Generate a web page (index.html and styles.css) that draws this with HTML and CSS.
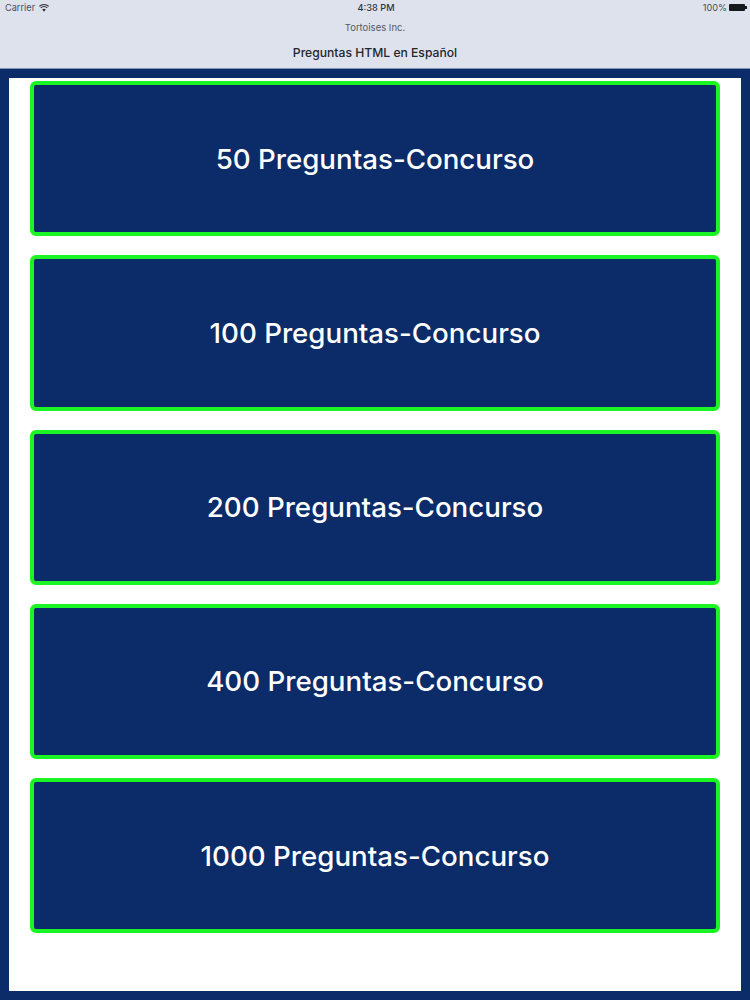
FILE: index.html
```html
<!DOCTYPE html>
<html lang="es">
<head>
<meta charset="utf-8">
<title>Preguntas HTML en Español</title>
<link rel="stylesheet" href="styles.css">
</head>
<body>
<header class="bar">
  <div class="status">
    <div class="status-left">
      <span>Carrier</span>
      <svg class="wifi" width="10" height="8" viewBox="0 0 11 8" aria-hidden="true">
        <path d="M5.5 8 3.6 5.6a3 3 0 0 1 3.8 0Z" fill="#2a2c34"/>
        <path d="M1.9 3.9a5.6 5.6 0 0 1 7.2 0" fill="none" stroke="#2a2c34" stroke-width="1.2"/>
        <path d="M.4 2.1a8 8 0 0 1 10.2 0" fill="none" stroke="#2a2c34" stroke-width="1.2"/>
      </svg>
    </div>
    <div class="status-time">4:38 PM</div>
    <div class="status-right">
      <span>100%</span>
      <span class="battery"><span class="battery-cap"></span></span>
    </div>
  </div>
  <div class="company">Tortoises Inc.</div>
  <div class="title">Preguntas HTML en Español</div>
</header>
<main class="frame">
  <div class="panel">
    <a class="quiz">50 Preguntas-Concurso</a>
    <a class="quiz">100 Preguntas-Concurso</a>
    <a class="quiz">200 Preguntas-Concurso</a>
    <a class="quiz">400 Preguntas-Concurso</a>
    <a class="quiz">1000 Preguntas-Concurso</a>
  </div>
</main>
</body>
</html>
```
FILE: styles.css
```css
* { box-sizing: border-box; }
html, body { margin: 0; padding: 0; }
body {
  width: 750px;
  height: 1000px;
  overflow: hidden;
  background: #0b2b69;
  font-family: Inter, "Liberation Sans", sans-serif;
  display: flex;
  flex-direction: column;
}
.bar {
  height: 69px;
  flex: none;
  background: #dde2ed;
  border-bottom: 1px solid #7f97bd;
  color: #24262e;
}
.status {
  height: 15px;
  display: grid;
  grid-template-columns: 1fr auto 1fr;
  align-items: center;
  padding: 0 3px 0 5px;
  font-size: 9.2px;
  line-height: 15px;
}
.status-left {
  display: flex;
  align-items: center;
  gap: 4px;
  color: #4a4d57;
}
.status-time { font-weight: 500; color: #30333c; }
.status-right {
  display: flex;
  justify-content: flex-end;
  align-items: center;
  gap: 2px;
  color: #4a4d57;
}
.battery {
  position: relative;
  display: block;
  width: 16px;
  height: 7px;
  margin-right: 2px;
  background: #17181d;
  border-radius: 1px;
}
.battery-cap {
  position: absolute;
  left: 16px;
  top: 2px;
  width: 2px;
  height: 3px;
  background: #17181d;
}
.company {
  margin-top: 7px;
  text-align: center;
  font-size: 9.5px;
  line-height: 12px;
  color: #565965;
}
.title {
  margin-top: 11px;
  text-align: center;
  font-size: 12.15px;
  line-height: 16px;
  font-weight: 500;
}
.frame {
  flex: 1;
  padding: 9px 9px 9px;
  display: flex;
}
.panel {
  flex: 1;
  background: #ffffff;
  padding: 3px 21px 0;
  display: flex;
  flex-direction: column;
  gap: 19px;
}
.quiz {
  height: 155.25px;
  flex: none;
  display: flex;
  align-items: center;
  justify-content: center;
  background: #0b2b69;
  border: 4px solid #1bf524;
  border-radius: 6px;
  color: #ffffff;
  font-size: 27.7px;
  font-weight: 500;
}
```
